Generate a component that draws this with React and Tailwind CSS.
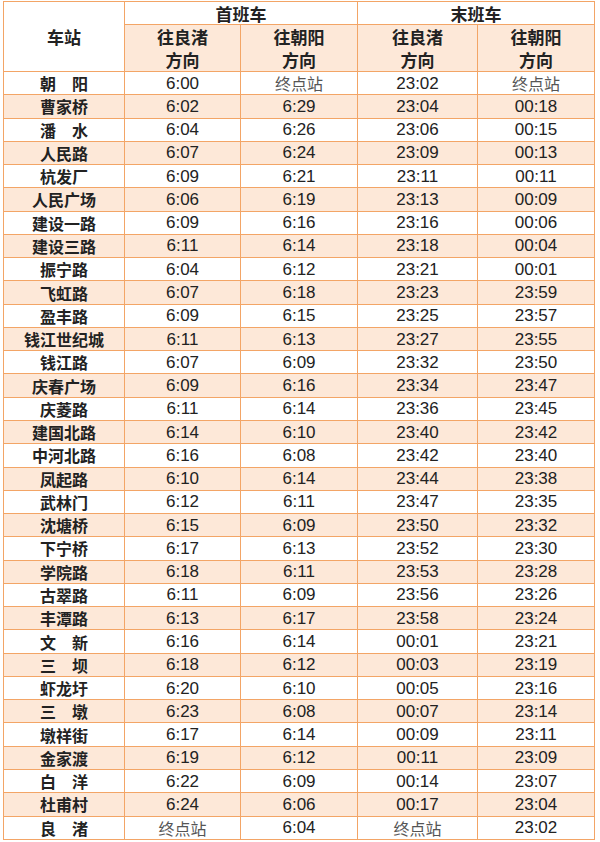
import React from 'react'

const rows = [
  ['朝\u3000阳', '6:00', '终点站', '23:02', '终点站'],
  ['曹家桥', '6:02', '6:29', '23:04', '00:18'],
  ['潘\u3000水', '6:04', '6:26', '23:06', '00:15'],
  ['人民路', '6:07', '6:24', '23:09', '00:13'],
  ['杭发厂', '6:09', '6:21', '23:11', '00:11'],
  ['人民广场', '6:06', '6:19', '23:13', '00:09'],
  ['建设一路', '6:09', '6:16', '23:16', '00:06'],
  ['建设三路', '6:11', '6:14', '23:18', '00:04'],
  ['振宁路', '6:04', '6:12', '23:21', '00:01'],
  ['飞虹路', '6:07', '6:18', '23:23', '23:59'],
  ['盈丰路', '6:09', '6:15', '23:25', '23:57'],
  ['钱江世纪城', '6:11', '6:13', '23:27', '23:55'],
  ['钱江路', '6:07', '6:09', '23:32', '23:50'],
  ['庆春广场', '6:09', '6:16', '23:34', '23:47'],
  ['庆菱路', '6:11', '6:14', '23:36', '23:45'],
  ['建国北路', '6:14', '6:10', '23:40', '23:42'],
  ['中河北路', '6:16', '6:08', '23:42', '23:40'],
  ['凤起路', '6:10', '6:14', '23:44', '23:38'],
  ['武林门', '6:12', '6:11', '23:47', '23:35'],
  ['沈塘桥', '6:15', '6:09', '23:50', '23:32'],
  ['下宁桥', '6:17', '6:13', '23:52', '23:30'],
  ['学院路', '6:18', '6:11', '23:53', '23:28'],
  ['古翠路', '6:11', '6:09', '23:56', '23:26'],
  ['丰潭路', '6:13', '6:17', '23:58', '23:24'],
  ['文\u3000新', '6:16', '6:14', '00:01', '23:21'],
  ['三\u3000坝', '6:18', '6:12', '00:03', '23:19'],
  ['虾龙圩', '6:20', '6:10', '00:05', '23:16'],
  ['三\u3000墩', '6:23', '6:08', '00:07', '23:14'],
  ['墩祥街', '6:17', '6:14', '00:09', '23:11'],
  ['金家渡', '6:19', '6:12', '00:11', '23:09'],
  ['白\u3000洋', '6:22', '6:09', '00:14', '23:07'],
  ['杜甫村', '6:24', '6:06', '00:17', '23:04'],
  ['良\u3000渚', '终点站', '6:04', '终点站', '23:02'],
]

const cjk = "font-['Noto_Sans_CJK_SC',sans-serif]"
const num = "font-['Liberation_Sans','Noto_Sans_CJK_SC',sans-serif]"

function Cell({ v }) {
  if (v === '终点站') {
    return <td className={`border-[1.5px] border-[#f3a566] p-0 text-center text-[16px] font-normal text-[#555] ${cjk}`}>{v}</td>
  }
  return <td className={`border-[1.5px] border-[#f3a566] p-0 text-center text-[17px] text-[#222] ${num}`}>{v}</td>
}

export default function App() {
  return (
    <div className="bg-white w-[600px] h-[842px] pl-[3px] pt-[1px]">
      <table className="table-fixed border-collapse w-[591px] leading-none">
        <colgroup>
          <col className="w-[121px]" />
          <col className="w-[116px]" />
          <col className="w-[117px]" />
          <col className="w-[120px]" />
          <col className="w-[117px]" />
        </colgroup>
        <thead>
          <tr className="h-[23px]">
            <th rowSpan={2} className={`border-[1.5px] border-[#f3a566] bg-white text-[17px] font-bold text-[#222] ${cjk}`}>车站</th>
            <th colSpan={2} className={`border-[1.5px] border-[#f3a566] bg-white text-[17px] font-bold text-[#222] ${cjk}`}>首班车</th>
            <th colSpan={2} className={`border-[1.5px] border-[#f3a566] bg-white text-[17px] font-bold text-[#222] ${cjk}`}>末班车</th>
          </tr>
          <tr className="h-[46px] bg-[#fde8d8]">
            {['往良渚', '往朝阳', '往良渚', '往朝阳'].map((t, i) => (
              <th key={i} className={`border-[1.5px] border-[#f3a566] p-0 text-[17px] font-bold text-[#222] ${cjk}`}>
                <div className="leading-[23px]">{t}</div>
                <div className="leading-[23px]">方向</div>
              </th>
            ))}
          </tr>
        </thead>
        <tbody>
          {rows.map((r, i) => (
            <tr key={i} className={`h-[23.27px] ${i % 2 === 1 ? 'bg-[#fde8d8]' : 'bg-white'}`}>
              <td className={`border-[1.5px] border-[#f3a566] p-0 text-center text-[16px] font-bold text-[#222] ${cjk}`}>{r[0]}</td>
              {r.slice(1).map((v, j) => <Cell key={j} v={v} />)}
            </tr>
          ))}
        </tbody>
      </table>
    </div>
  )
}
